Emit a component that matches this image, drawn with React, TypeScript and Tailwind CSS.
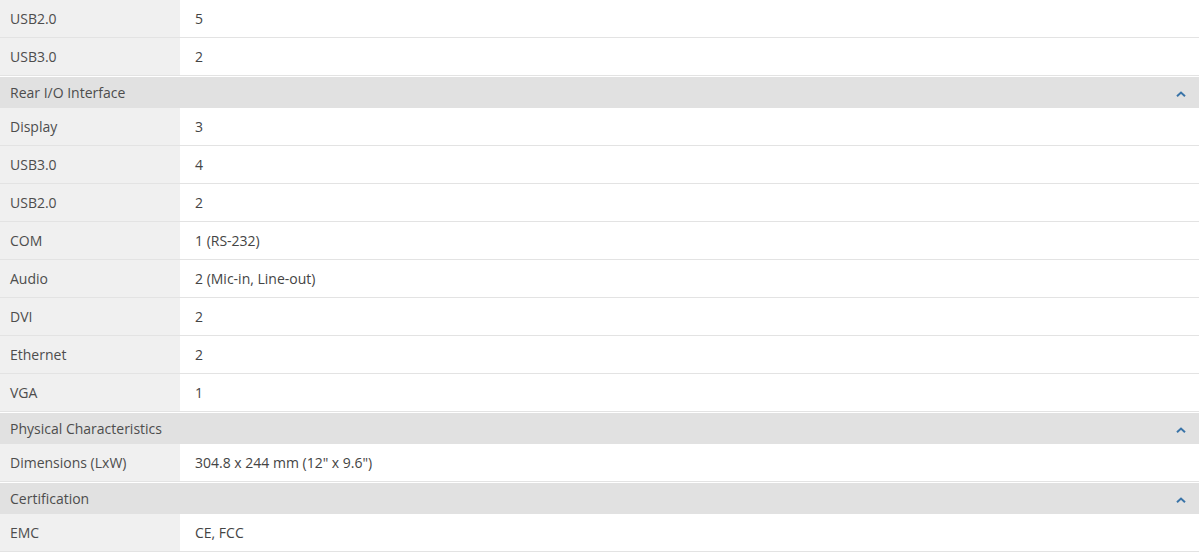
const SECTIONS: { title?: string; rows: [string, string][] }[] = [
  { rows: [["USB2.0", "5"], ["USB3.0", "2"]] },
  {
    title: "Rear I/O Interface",
    rows: [
      ["Display", "3"],
      ["USB3.0", "4"],
      ["USB2.0", "2"],
      ["COM", "1 (RS-232)"],
      ["Audio", "2 (Mic-in, Line-out)"],
      ["DVI", "2"],
      ["Ethernet", "2"],
      ["VGA", "1"],
    ],
  },
  { title: "Physical Characteristics", rows: [["Dimensions (LxW)", "304.8 x 244 mm (12\" x 9.6\")"]] },
  { title: "Certification", rows: [["EMC", "CE, FCC"]] },
];

function Chevron() {
  return (
    <svg width="10" height="6" viewBox="0 0 10 6" className="mr-[13px] mt-[2px]">
      <path d="M1 5.2 L5 1.5 L9 5.2" fill="none" stroke="#3a74a8" strokeWidth="2" />
    </svg>
  );
}

export default function App() {
  return (
    <div className="w-[1199px] h-[552px] overflow-hidden bg-white font-['Open_Sans',sans-serif] text-[14px] text-[#4d4d4d]">
      {SECTIONS.map((s, i) => (
        <div key={i}>
          {s.title && (
            <div className="h-[32px] border-t border-white bg-[#e1e1e1] flex items-center justify-between pl-[10px]">
              <span>{s.title}</span>
              <Chevron />
            </div>
          )}
          {s.rows.map(([k, v], j) => (
            <div key={j} className="flex h-[38px] border-b border-[#e3e3e3]">
              <div className="w-[180px] shrink-0 bg-[#f0f0f0] pl-[10px] flex items-center">{k}</div>
              <div className="pl-[15px] flex items-center text-[#444]">{v}</div>
            </div>
          ))}
        </div>
      ))}
    </div>
  );
}
